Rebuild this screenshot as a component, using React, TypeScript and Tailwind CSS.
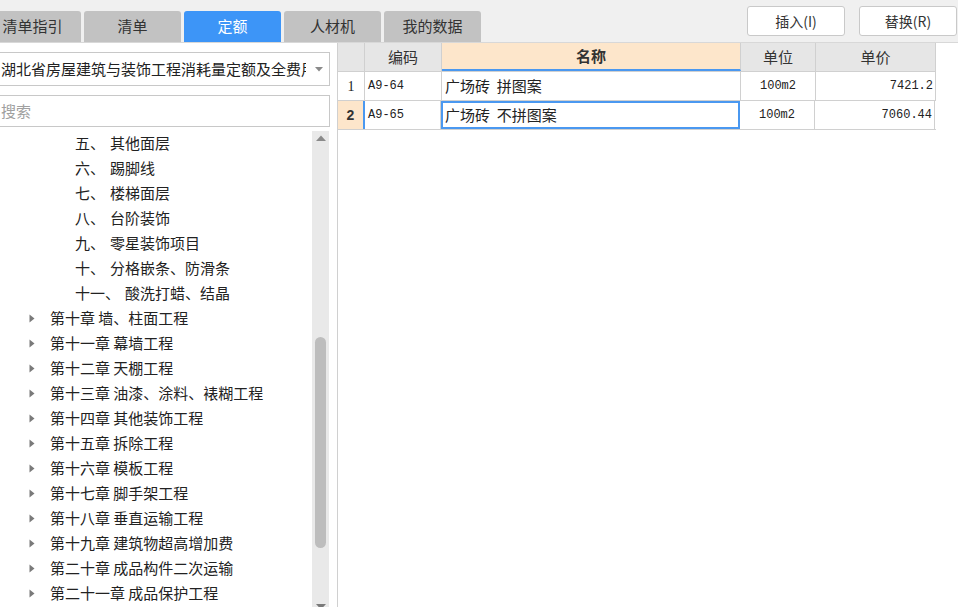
import React from "react";

const subs = [
  ["五、", "其他面层"],
  ["六、", "踢脚线"],
  ["七、", "楼梯面层"],
  ["八、", "台阶装饰"],
  ["九、", "零星装饰项目"],
  ["十、", "分格嵌条、防滑条"],
  ["十一、", "酸洗打蜡、结晶"],
];

const chapters = [
  "第十章 墙、柱面工程",
  "第十一章 幕墙工程",
  "第十二章 天棚工程",
  "第十三章 油漆、涂料、裱糊工程",
  "第十四章 其他装饰工程",
  "第十五章 拆除工程",
  "第十六章 模板工程",
  "第十七章 脚手架工程",
  "第十八章 垂直运输工程",
  "第十九章 建筑物超高增加费",
  "第二十章 成品构件二次运输",
  "第二十一章 成品保护工程",
];

const tabs = ["清单指引", "清单", "定额", "人材机", "我的数据"];

function Tri() {
  return (
    <svg width="6" height="9" viewBox="0 0 6 9" className="shrink-0">
      <path d="M0.5 0.5 L5.5 4.5 L0.5 8.5 Z" fill="#7a7a7a" />
    </svg>
  );
}

export default function App() {
  return (
    <div className="w-[958px] h-[607px] overflow-hidden bg-white flex flex-col font-['Noto_Sans_CJK_SC',sans-serif] text-[#222]">
      {/* top bar */}
      <div className="h-[43px] shrink-0 bg-[#f0f0f0] border-b border-[#d8d8d8] flex justify-between">
        <div className="flex items-end gap-[3px] ml-[-16px]">
          {tabs.map((t, i) => (
            <div
              key={t}
              className={
                i === 2
                  ? "w-[97px] h-[31px] rounded-t-[3px] bg-[#3d95f7] text-white text-[15px] flex items-center justify-center"
                  : "w-[97px] h-[31px] rounded-t-[3px] bg-[#c2c2c2] text-[#333] text-[15px] flex items-center justify-center"
              }
            >
              <span>{t}</span>
            </div>
          ))}
        </div>
        <div className="flex items-start gap-[14px] mt-[6px] mr-[1px]">
          <button className="w-[98px] h-[30px] bg-white border border-[#c9c9c9] rounded-[3px] text-[14px] text-[#333] flex items-center justify-center">
            插入(I)
          </button>
          <button className="w-[98px] h-[30px] bg-white border border-[#c9c9c9] rounded-[3px] text-[14px] text-[#333] flex items-center justify-center">
            替换(R)
          </button>
        </div>
      </div>

      <div className="flex flex-1 min-h-0">
        {/* left panel */}
        <div className="w-[338px] shrink-0 border-r border-[#d0d0d0] flex flex-col">
          <div className="mt-[9px] ml-[-1px] w-[331px] h-[34px] border border-[#c8c8c8] bg-white flex items-center relative">
            <span className="pl-[1px] text-[15px] whitespace-nowrap overflow-hidden w-[306px]">
              湖北省房屋建筑与装饰工程消耗量定额及全费用基价表
            </span>
            <svg width="8" height="5" viewBox="0 0 8 5" className="absolute left-[315px] top-[14px]">
              <path d="M0 0 L8 0 L4 4.5 Z" fill="#8a8a8a" />
            </svg>
          </div>
          <div className="mt-[9px] ml-[-1px] w-[331px] h-[32px] border border-[#c8c8c8] bg-white flex items-center">
            <span className="pl-[1px] text-[15px] text-[#a0a0a0]">搜索</span>
          </div>
          <div className="mt-[4px] flex flex-1 min-h-0">
            <div className="flex-1 overflow-hidden">
              {subs.map(([a, b]) => (
                <div key={a} className="h-[25px] flex items-center pl-[75px] text-[15px] whitespace-nowrap">
                  <span>{a}</span>
                  <span className="ml-[5px]">{b}</span>
                </div>
              ))}
              {chapters.map((c) => (
                <div key={c} className="h-[25px] flex items-center pl-[29px] text-[15px] whitespace-nowrap">
                  <Tri />
                  <span className="ml-[15px]">{c}</span>
                </div>
              ))}
            </div>
            <div className="w-[17px] bg-[#e9e9e9] flex flex-col items-center relative">
              <svg width="10" height="6" viewBox="0 0 10 6" className="mt-[4px]">
                <path d="M0 6 L10 6 L5 0.5 Z" fill="#8a8a8a" />
              </svg>
              <div className="mt-[196px] w-[11px] h-[211px] rounded-full bg-[#bdbdbd]" />
              <svg width="10" height="6" viewBox="0 0 10 6" className="absolute bottom-[-3px] left-[4px]">
                <path d="M0 0 L10 0 L5 5.5 Z" fill="#7a7a7a" />
              </svg>
            </div>
            <div className="w-[8px]" />
          </div>
        </div>

        {/* right panel */}
        <div className="flex-1 bg-white">
          <div className="w-[598px] text-[14px]">
            {/* header */}
            <div className="flex h-[29px] border-b border-[#d0d0d0]">
              <div className="w-[27px] bg-[#e6e6e6] border-r border-[#d0d0d0]" />
              <div className="w-[77px] bg-[#e6e6e6] border-r border-[#d0d0d0] flex items-center justify-center text-[15px] text-[#333]">
                编码
              </div>
              <div className="w-[299px] bg-[#fde6cb] border-r border-[#d0d0d0] border-b-2 border-b-[#4a98f0] flex items-center justify-center text-[15px] font-bold text-[#333]">
                名称
              </div>
              <div className="w-[75px] bg-[#e6e6e6] border-r border-[#d0d0d0] flex items-center justify-center text-[15px] text-[#333]">
                单位
              </div>
              <div className="w-[120px] bg-[#e6e6e6] border-r border-[#d0d0d0] flex items-center justify-center text-[15px] text-[#333]">
                单价
              </div>
            </div>
            {/* row 1 */}
            <div className="flex h-[29px] border-b border-[#d0d0d0]">
              <div className="w-[27px] border-r border-[#d0d0d0] flex items-center justify-center font-['Liberation_Serif',serif] text-[14px]">
                1
              </div>
              <div className="w-[77px] border-r border-[#d0d0d0] flex items-center pl-[3px] font-['Liberation_Mono',monospace] text-[12px]">
                A9-64
              </div>
              <div className="w-[299px] border-r border-[#d0d0d0] flex items-center pl-[3px] text-[15px] whitespace-pre">
                广场砖  拼图案
              </div>
              <div className="w-[75px] border-r border-[#d0d0d0] flex items-center justify-center font-['Liberation_Mono',monospace] text-[12px]">
                100m2
              </div>
              <div className="w-[120px] border-r border-[#d0d0d0] flex items-center justify-end pr-[2px] font-['Liberation_Mono',monospace] text-[12px]">
                7421.2
              </div>
            </div>
            {/* row 2 */}
            <div className="flex h-[29px] border-b border-[#d0d0d0]">
              <div className="w-[27px] bg-[#fde6cb] border-r-2 border-[#4a98f0] flex items-center justify-center font-bold font-['Liberation_Sans',sans-serif] text-[14px] text-[#333]">
                2
              </div>
              <div className="w-[76px] border-r border-[#d0d0d0] flex items-center pl-[3px] font-['Liberation_Mono',monospace] text-[12px]">
                A9-65
              </div>
              <div className="w-[299px] border-2 border-[#4a98f0] flex items-center pl-[2px] text-[15px] whitespace-pre">
                广场砖  不拼图案
              </div>
              <div className="w-[75px] border-r border-[#d0d0d0] flex items-center justify-center font-['Liberation_Mono',monospace] text-[12px]">
                100m2
              </div>
              <div className="w-[120px] border-r border-[#d0d0d0] flex items-center justify-end pr-[2px] font-['Liberation_Mono',monospace] text-[12px]">
                7060.44
              </div>
            </div>
          </div>
        </div>
      </div>
    </div>
  );
}
